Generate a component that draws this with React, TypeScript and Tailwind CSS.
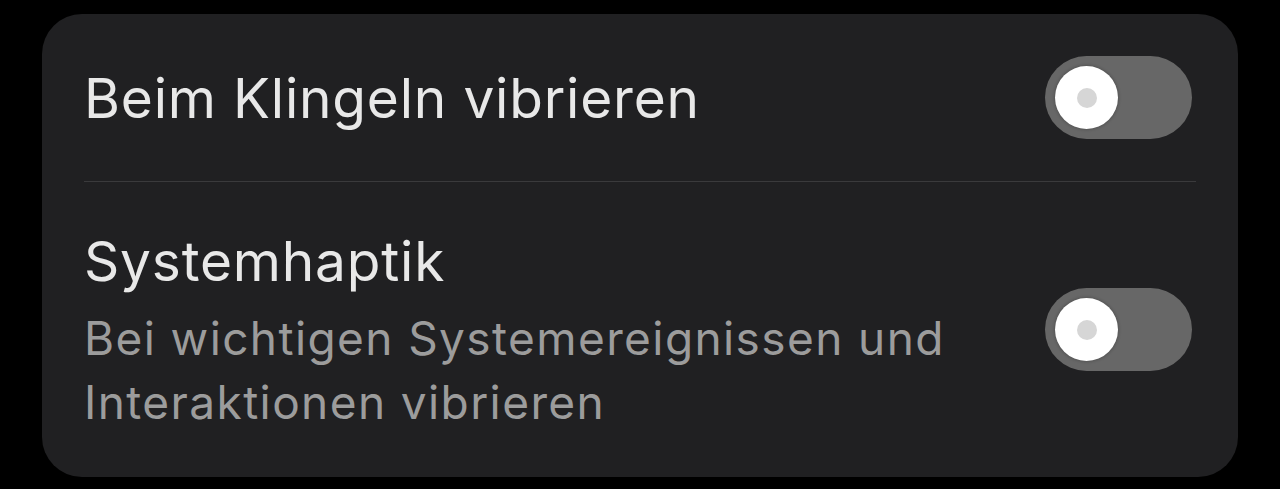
import React from "react";

function Toggle() {
  return (
    <div className="mr-[4px] flex h-[83px] w-[147px] shrink-0 items-center rounded-full bg-[#676767] pl-[10px]">
      <div className="flex h-[63px] w-[63px] items-center justify-center rounded-full bg-white shadow-[0_0_3px_1px_rgba(0,0,0,0.18)]">
        <div className="h-[20px] w-[20px] rounded-full bg-[#d6d6d6]" />
      </div>
    </div>
  );
}

export default function App() {
  return (
    <div
      className="h-[489px] w-[1280px] bg-black pl-[42px] pt-[14px]"
      style={{ fontFamily: "Inter, 'Noto Sans', sans-serif" }}
    >
      <div className="flex h-[463px] w-[1196px] flex-col rounded-[40px] bg-[#202022] px-[42px]">
        <div className="flex h-[167px] items-center justify-between">
          <div className="text-[55px] leading-[70px] tracking-[0.8px] text-[#e8e8e8]">Beim Klingeln vibrieren</div>
          <Toggle />
        </div>
        <div className="h-px bg-[#3a3a3c]" />
        <div className="flex flex-1 items-center justify-between">
          <div>
            <div className="mb-[10px] text-[55px] leading-[70px] tracking-[0.8px] text-[#e8e8e8]">Systemhaptik</div>
            <div className="text-[46px] leading-[64px] tracking-[1.4px] text-[#9c9c9c]">
              Bei wichtigen Systemereignissen und
              <br />
              Interaktionen vibrieren
            </div>
          </div>
          <Toggle />
        </div>
      </div>
    </div>
  );
}
